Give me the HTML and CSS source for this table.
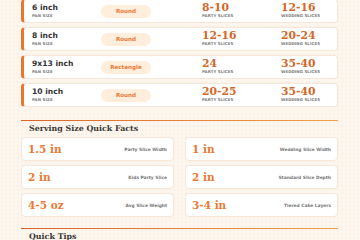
FILE: index.html
```html
<!DOCTYPE html>
<html>
<head>
<meta charset="utf-8">
<link rel="stylesheet" href="styles.css">
</head>
<body>
<div class="page">
  <div class="rows">
    <div class="row">
      <div class="pan"><div class="pan-name">6 inch</div><div class="cap">PAN SIZE</div></div>
      <div class="shape"><span class="badge">Round</span></div>
      <div class="cnt"><div class="num">8-10</div><div class="cap">PARTY SLICES</div></div>
      <div class="cnt"><div class="num">12-16</div><div class="cap">WEDDING SLICES</div></div>
    </div>
    <div class="row">
      <div class="pan"><div class="pan-name">8 inch</div><div class="cap">PAN SIZE</div></div>
      <div class="shape"><span class="badge">Round</span></div>
      <div class="cnt"><div class="num">12-16</div><div class="cap">PARTY SLICES</div></div>
      <div class="cnt"><div class="num">20-24</div><div class="cap">WEDDING SLICES</div></div>
    </div>
    <div class="row">
      <div class="pan"><div class="pan-name">9x13 inch</div><div class="cap">PAN SIZE</div></div>
      <div class="shape"><span class="badge">Rectangle</span></div>
      <div class="cnt"><div class="num">24</div><div class="cap">PARTY SLICES</div></div>
      <div class="cnt"><div class="num">35-40</div><div class="cap">WEDDING SLICES</div></div>
    </div>
    <div class="row">
      <div class="pan"><div class="pan-name">10 inch</div><div class="cap">PAN SIZE</div></div>
      <div class="shape"><span class="badge">Round</span></div>
      <div class="cnt"><div class="num">20-25</div><div class="cap">PARTY SLICES</div></div>
      <div class="cnt"><div class="num">35-40</div><div class="cap">WEDDING SLICES</div></div>
    </div>
  </div>

  <section class="section">
    <h2 class="sec-title">Serving Size Quick Facts</h2>
    <div class="facts">
      <div class="fact"><span class="fact-val">1.5 in</span><span class="fact-lbl">Party Slice Width</span></div>
      <div class="fact"><span class="fact-val">1 in</span><span class="fact-lbl">Wedding Slice Width</span></div>
      <div class="fact"><span class="fact-val">2 in</span><span class="fact-lbl">Kids Party Slice</span></div>
      <div class="fact"><span class="fact-val">2 in</span><span class="fact-lbl">Standard Slice Depth</span></div>
      <div class="fact"><span class="fact-val">4-5 oz</span><span class="fact-lbl">Avg Slice Weight</span></div>
      <div class="fact"><span class="fact-val">3-4 in</span><span class="fact-lbl">Tiered Cake Layers</span></div>
    </div>
  </section>

  <section class="section section-tips">
    <h2 class="sec-title">Quick Tips</h2>
  </section>
</div>
</body>
</html>
```

FILE: styles.css
```css
html, body {
  margin: 0;
  padding: 0;
}
body {
  background-color: #fdf6ee;
  background-image: radial-gradient(rgba(225, 170, 120, 0.09) 0.7px, transparent 0.8px);
  background-size: 4px 4px;
  font-family: "DejaVu Sans", Verdana, sans-serif;
  overflow: hidden;
}
.page {
  margin-top: -1px;
  padding: 0 22px 0 21px;
}
.rows {
  display: flex;
  flex-direction: column;
  gap: 4px;
}
.row {
  height: 24px;
  box-sizing: border-box;
  background: #ffffff;
  border: 1px solid #f4e6d8;
  border-left: 3px solid #ea7530;
  border-radius: 4px;
  display: grid;
  grid-template-columns: 69px 101px 79px 1fr;
  align-items: center;
  padding: 0 0 0 8px;
}
.pan-name {
  font-size: 7.6px;
  font-weight: bold;
  color: #333333;
  line-height: 9px;
}
.cap {
  font-size: 3.9px;
  font-weight: bold;
  color: #7a7a7a;
  letter-spacing: 0.1px;
  line-height: 6px;
  margin-top: 1px;
}
.shape {
  display: flex;
}
.badge {
  width: 50px;
  height: 13px;
  border-radius: 7px;
  background: #feeedb;
  color: #ea7a35;
  font-size: 5.6px;
  font-weight: bold;
  display: flex;
  align-items: center;
  justify-content: center;
}
.num {
  font-family: "DejaVu Serif", serif;
  font-weight: bold;
  font-size: 10.8px;
  color: #d2692a;
  line-height: 9px;
}
.section {
  margin-top: 13px;
  border-top: 1.5px solid #e27636;
  border-image: linear-gradient(90deg, #d9652a, #f0a04a) 1;
}
.section-tips {
  margin-top: 11px;
}
.sec-title {
  margin: 0;
  padding: 2px 0 0 8px;
  font-family: "DejaVu Serif", serif;
  font-weight: bold;
  font-size: 7.9px;
  line-height: 11px;
  color: #3a3633;
}
.facts {
  margin-top: 3px;
  display: grid;
  grid-template-columns: 1fr 1fr;
  column-gap: 11px;
  row-gap: 4px;
}
.fact {
  height: 24px;
  box-sizing: border-box;
  background: #ffffff;
  border: 1px solid #f5e6d8;
  border-radius: 4px;
  display: flex;
  align-items: center;
  justify-content: space-between;
  padding: 0 6px 0 6px;
}
.fact-val {
  font-family: "DejaVu Serif", serif;
  font-weight: bold;
  font-size: 10.5px;
  color: #ea7a35;
}
.fact-lbl {
  font-size: 4.4px;
  font-weight: bold;
  color: #777777;
}
```
